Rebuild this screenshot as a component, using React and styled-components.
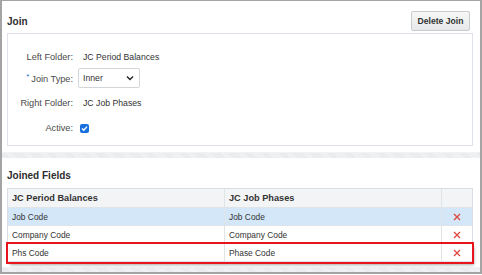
import React from 'react';
import styled, { createGlobalStyle } from 'styled-components';

const GlobalStyle = createGlobalStyle`
  html, body {
    margin: 0;
    padding: 0;
    background: #fff;
  }
`;

const Frame = styled.div`
  width: 482px;
  height: 274px;
  box-sizing: border-box;
  border: 2px solid #a4a4a4;
  border-top-width: 1px;
  background: #fff;
  display: flex;
  flex-direction: column;
  font-family: "Liberation Sans", Arial, sans-serif;
  color: #333;
`;

const Section = styled.section`
  padding: ${p => p.$pad};
  flex: ${p => (p.$grow ? 1 : 'none')};
`;

const Header = styled.div`
  display: flex;
  align-items: center;
  justify-content: space-between;
  height: 20px;
  margin-bottom: 2px;
`;

const Title = styled.h2`
  margin: 0;
  font-size: 10px;
  font-weight: bold;
  line-height: 15px;
  color: #2e2e2e;
  margin-bottom: ${p => p.$mb || 0}px;
`;

const Button = styled.button`
  height: 20px;
  width: 59px;
  margin-right: 3px;
  padding: 0;
  box-sizing: border-box;
  border: 1px solid #c8cbce;
  border-radius: 2px;
  background: linear-gradient(#f7f7f7, #e7e8e9);
  font-family: inherit;
  font-size: 8.6px;
  font-weight: bold;
  color: #333;
`;

const Panel = styled.div`
  height: 113px;
  box-sizing: border-box;
  border: 1px solid #dde3e9;
  padding-top: 13px;
`;

const FormRow = styled.div`
  display: grid;
  grid-template-columns: 65px 1fr;
  column-gap: 5px;
  align-items: center;
  height: 20px;
  margin-top: ${p => p.$mt || 0}px;
`;

const Label = styled.span`
  text-align: right;
  font-size: 9.2px;
  color: #4a4a4a;
  white-space: nowrap;
`;

const Star = styled.span`
  color: #2a73c9;
  font-size: 8px;
  vertical-align: 3px;
  margin-right: 2px;
`;

const Value = styled.span`
  padding-left: 5px;
  font-size: 8.7px;
  color: #333;
`;

const Select = styled.div`
  width: 62px;
  height: 20px;
  box-sizing: border-box;
  border: 1px solid #d3d6d9;
  border-radius: 2px;
  display: flex;
  align-items: center;
  justify-content: space-between;
  padding: 0 5px 0 4px;
  font-size: 8.7px;
  color: #333;
  background: #fff;
`;

const Check = styled.span`
  width: 9px;
  height: 9px;
  margin-left: 2px;
  border-radius: 2px;
  background: #1a6fdf;
  display: flex;
  align-items: center;
  justify-content: center;
`;

const Strip = styled.div`
  height: ${p => p.$h}px;
  flex: none;
  background: repeating-linear-gradient(45deg, #e6e8eb 0 1px, #f3f4f6 1px 2px);
  border-top: 1px solid #f0f2f4;
  box-sizing: border-box;
`;

const Table = styled.div`
  border: 1px solid #d8dee4;
  border-bottom: none;
`;

const TRow = styled.div`
  display: grid;
  grid-template-columns: 217px 217px 1fr;
  height: ${p => p.$h}px;
  box-sizing: border-box;
  border-bottom: 1px solid #dfe4e9;
  background: ${p => p.$bg || '#fff'};
  position: relative;
  ${p => p.$marked && `
    outline: 2.5px solid #e8141c;
    outline-offset: 0.5px;
    box-shadow: 2px 3px 3px rgba(0,0,0,0.35);
  `}
`;

const Cell = styled.div`
  display: flex;
  align-items: center;
  justify-content: ${p => (p.$center ? 'center' : 'flex-start')};
  padding-left: ${p => (p.$center ? 0 : 4)}px;
  border-right: ${p => (p.$last ? 'none' : '1px solid #dfe4e9')};
  font-size: ${p => (p.$head ? 9.2 : 8.4)}px;
  font-weight: ${p => (p.$head ? 'bold' : 'normal')};
  color: #333;
  white-space: nowrap;
`;

const Chevron = () => (
  <svg width="8" height="6" viewBox="0 0 8 6">
    <path d="M1 1.5 L4 4.5 L7 1.5" fill="none" stroke="#222" strokeWidth="1.4" />
  </svg>
);

const Tick = () => (
  <svg width="7" height="7" viewBox="0 0 7 7">
    <path d="M1 3.6 L2.8 5.3 L6 1.6" fill="none" stroke="#fff" strokeWidth="1.4" />
  </svg>
);

const Cross = () => (
  <svg width="8" height="8" viewBox="0 0 8 8">
    <path d="M1 1 L7 7 M7 1 L1 7" stroke="#e0463c" strokeWidth="1.3" />
  </svg>
);

const rows = [
  { left: 'Job Code', right: 'Job Code', bg: '#d3e7f8' },
  { left: 'Company Code', right: 'Company Code' },
  { left: 'Phs Code', right: 'Phase Code', marked: true },
];

export default function App() {
  return (
    <>
      <GlobalStyle />
      <Frame>
        <Section $pad="10px 7px 6px 5px">
          <Header>
            <Title>Join</Title>
            <Button>Delete Join</Button>
          </Header>
          <Panel>
            <FormRow>
              <Label>Left Folder:</Label>
              <Value>JC Period Balances</Value>
            </FormRow>
            <FormRow $mt={1}>
              <Label><Star>*</Star>Join Type:</Label>
              <Select>Inner<Chevron /></Select>
            </FormRow>
            <FormRow $mt={5}>
              <Label>Right Folder:</Label>
              <Value>JC Job Phases</Value>
            </FormRow>
            <FormRow $mt={5}>
              <Label>Active:</Label>
              <Check><Tick /></Check>
            </FormRow>
          </Panel>
        </Section>
        <Strip $h={6} />
        <Section $grow $pad="10px 7px 0 5px">
          <Title $mb={5}>Joined Fields</Title>
          <Table>
            <TRow $h={19} $bg="#f2f4f6">
              <Cell $head>JC Period Balances</Cell>
              <Cell $head>JC Job Phases</Cell>
              <Cell $head $last />
            </TRow>
            {rows.map(r => (
              <TRow key={r.left} $h={18} $bg={r.bg} $marked={r.marked}>
                <Cell>{r.left}</Cell>
                <Cell>{r.right}</Cell>
                <Cell $center $last><Cross /></Cell>
              </TRow>
            ))}
          </Table>
        </Section>
        <Strip $h={5} />
      </Frame>
    </>
  );
}
